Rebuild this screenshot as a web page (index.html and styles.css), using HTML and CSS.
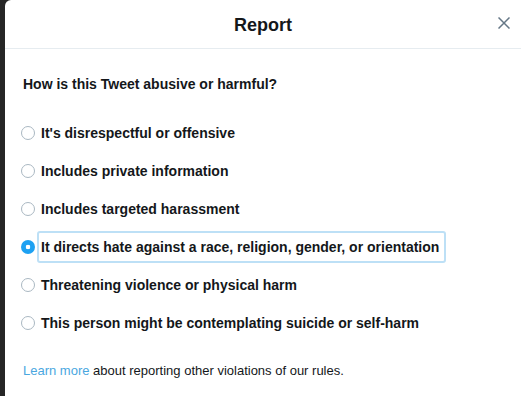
FILE: index.html
```html
<!DOCTYPE html>
<html lang="en">
<head>
  <meta charset="UTF-8">
  <title>Report</title>
  <link rel="stylesheet" href="styles.css">
</head>
<body>
  <div class="modal">
    <div class="modal-header">
      <h2 class="title">Report</h2>
      <button class="close" aria-label="Close">
        <svg width="12" height="12" viewBox="0 0 12 12"><path d="M0.5 0.5 L11.5 11.5 M11.5 0.5 L0.5 11.5" stroke="#657786" stroke-width="1.5" fill="none"/></svg>
      </button>
    </div>
    <div class="modal-body">
      <p class="question">How is this Tweet abusive or harmful?</p>
      <ul class="options">
        <li class="option"><span class="radio"></span><span class="label">It's disrespectful or offensive</span></li>
        <li class="option"><span class="radio"></span><span class="label">Includes private information</span></li>
        <li class="option"><span class="radio"></span><span class="label">Includes targeted harassment</span></li>
        <li class="option selected"><span class="radio"></span><span class="label">It directs hate against a race, religion, gender, or orientation</span></li>
        <li class="option"><span class="radio"></span><span class="label">Threatening violence or physical harm</span></li>
        <li class="option"><span class="radio"></span><span class="label">This person might be contemplating suicide or self-harm</span></li>
      </ul>
      <p class="footer"><a href="#">Learn more</a> about reporting other violations of our rules.</p>
    </div>
  </div>
</body>
</html>
```
FILE: styles.css
```css
body {
  margin: 0;
  background-color: #262626;
  font-family: "Liberation Sans", Arial, sans-serif;
  color: #14171a;
  height: 396px;
  overflow: hidden;
}

.modal {
  margin-left: 5px;
  height: 396px;
  background-color: #fff;
  border-top-left-radius: 6px;
}

.modal-header {
  position: relative;
  height: 48px;
  border-bottom: 1px solid #e6ecf0;
  display: flex;
  align-items: center;
  justify-content: center;
}

.title {
  margin: 0;
  padding-top: 2px;
  font-size: 18px;
  font-weight: bold;
}

.close {
  position: absolute;
  right: 11px;
  top: 17px;
  background: none;
  border: none;
  padding: 0;
  width: 12px;
  height: 12px;
  display: flex;
}

.modal-body {
  padding: 26px 0 0 16px;
}

.question {
  margin: 0 0 26px 2px;
  font-size: 14px;
  font-weight: bold;
  line-height: 18px;
}

.options {
  list-style: none;
  margin: 0;
  padding: 0;
  display: flex;
  flex-direction: column;
  gap: 10px;
}

.option {
  display: flex;
  align-items: center;
  height: 28px;
}

.radio {
  box-sizing: border-box;
  width: 14px;
  height: 14px;
  border: 1px solid #aab8c2;
  border-radius: 50%;
  flex-shrink: 0;
}

.label {
  font-size: 14px;
  font-weight: bold;
  line-height: 28px;
  margin-left: 2px;
  padding: 0 5px 0 2px;
  border: 2px solid transparent;
  border-radius: 3px;
}

.selected .radio {
  border: none;
  background: radial-gradient(circle, #fff 0, #fff 2px, #1da1f2 2.6px);
}

.selected .label {
  border-color: #bde0f6;
}

.footer {
  margin: 25px 0 0 2px;
  font-size: 13px;
  line-height: 18px;
}

.footer a {
  color: #4aa7df;
  text-decoration: none;
}
```
